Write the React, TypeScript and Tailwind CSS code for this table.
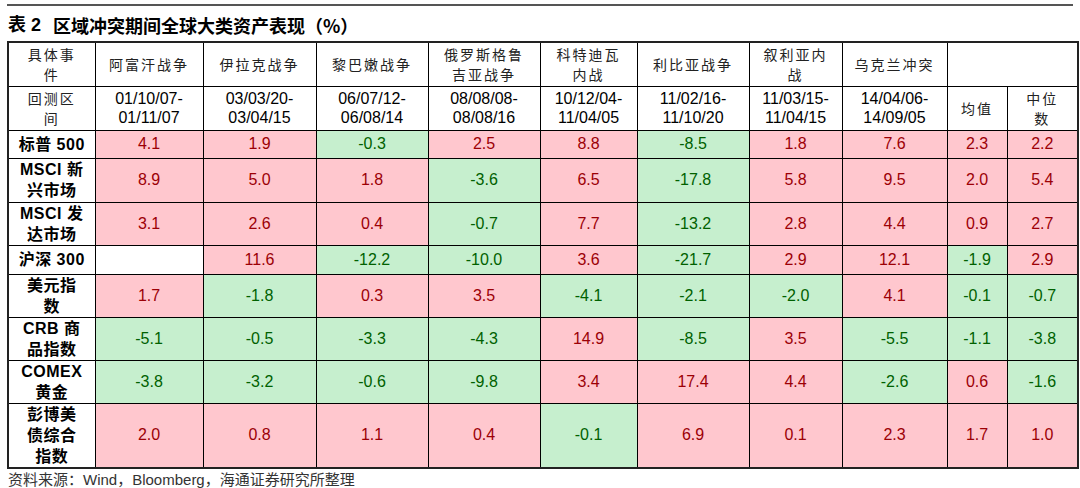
import React from "react";

const CN = "font-['Noto_Sans_CJK_SC',sans-serif]";
const NUM = "font-['Liberation_Sans','Noto_Sans_CJK_SC',sans-serif]";

const COLS = [87, 108, 113, 112, 112, 97, 112, 93, 105, 60, 71];

const EVENTS: string[][] = [
  ["阿富汗战争"],
  ["伊拉克战争"],
  ["黎巴嫩战争"],
  ["俄罗斯格鲁", "吉亚战争"],
  ["科特迪瓦", "内战"],
  ["利比亚战争"],
  ["叙利亚内", "战"],
  ["乌克兰冲突"],
];

const PERIODS: [string, string][] = [
  ["01/10/07-", "01/11/07"],
  ["03/03/20-", "03/04/15"],
  ["06/07/12-", "06/08/14"],
  ["08/08/08-", "08/08/16"],
  ["10/12/04-", "11/04/05"],
  ["11/02/16-", "11/10/20"],
  ["11/03/15-", "11/04/15"],
  ["14/04/06-", "14/09/05"],
];

type Row = { label: string[]; h: number; vals: (number | null)[] };

const ROWS: Row[] = [
  { label: ["标普 500"], h: 28, vals: [4.1, 1.9, -0.3, 2.5, 8.8, -8.5, 1.8, 7.6, 2.3, 2.2] },
  { label: ["MSCI 新", "兴市场"], h: 44, vals: [8.9, 5.0, 1.8, -3.6, 6.5, -17.8, 5.8, 9.5, 2.0, 5.4] },
  { label: ["MSCI 发", "达市场"], h: 42, vals: [3.1, 2.6, 0.4, -0.7, 7.7, -13.2, 2.8, 4.4, 0.9, 2.7] },
  { label: ["沪深 300"], h: 29, vals: [null, 11.6, -12.2, -10.0, 3.6, -21.7, 2.9, 12.1, -1.9, 2.9] },
  { label: ["美元指", "数"], h: 43, vals: [1.7, -1.8, 0.3, 3.5, -4.1, -2.1, -2.0, 4.1, -0.1, -0.7] },
  { label: ["CRB 商", "品指数"], h: 43, vals: [-5.1, -0.5, -3.3, -4.3, 14.9, -8.5, 3.5, -5.5, -1.1, -3.8] },
  { label: ["COMEX", "黄金"], h: 41, vals: [-3.8, -3.2, -0.6, -9.8, 3.4, 17.4, 4.4, -2.6, 0.6, -1.6] },
  { label: ["彭博美", "债综合", "指数"], h: 64, vals: [2.0, 0.8, 1.1, 0.4, -0.1, 6.9, 0.1, 2.3, 1.7, 1.0] },
];

const cell = "border border-black p-0 text-center align-middle";

function Lines({ lines }: { lines: string[] }) {
  return (
    <>
      {lines.map((l, i) => (
        <div key={i}>{l}</div>
      ))}
    </>
  );
}

export default function App() {
  return (
    <div className="w-[1080px] h-[488px] bg-white px-[7px] pt-[4px] text-black">
      {/* title */}
      <div className="border-t-2 border-[#555]" />
      <div className={`h-[35px] pt-[3px] flex items-center text-[18px] font-bold ${NUM} pl-[1px]`}>
        <span>表 2</span>
        <span className={`ml-[12px] ${CN}`}>区域冲突期间全球大类资产表现（%）</span>
      </div>

      <table className="table-fixed border-collapse w-[1070px] border-2 border-[#222]">
        <colgroup>
          {COLS.map((w, i) => (
            <col key={i} style={{ width: w }} />
          ))}
        </colgroup>
        <tbody>
          {/* event names */}
          <tr className="h-[44px]">
            <td className={`${cell} ${CN} text-[14px] leading-[20px] tracking-[2px] text-[#222]`}>
              <Lines lines={["具体事", "件"]} />
            </td>
            {EVENTS.map((e, i) => (
              <td key={i} className={`${cell} ${CN} text-[14px] leading-[20px] tracking-[2px] text-[#222]`}>
                <Lines lines={e} />
              </td>
            ))}
            <td colSpan={2} className={cell} />
          </tr>

          {/* periods */}
          <tr className="h-[44px]">
            <td className={`${cell} ${CN} text-[14px] leading-[20px] tracking-[2px] text-[#222]`}>
              <Lines lines={["回测区", "间"]} />
            </td>
            {PERIODS.map((p, i) => (
              <td key={i} className={`${cell} ${NUM} text-[16px] leading-[19px]`}>
                <Lines lines={p} />
              </td>
            ))}
            <td className={`${cell} ${CN} text-[14px] tracking-[2px] text-[#222]`}>均值</td>
            <td className={`${cell} ${CN} text-[14px] leading-[20px] tracking-[2px] text-[#222]`}>
              <Lines lines={["中位", "数"]} />
            </td>
          </tr>

          {/* values */}
          {ROWS.map((r, ri) => (
            <tr key={ri} style={{ height: r.h }}>
              <td className={`${cell} ${NUM} text-[16px] font-bold leading-[21px] tracking-[0.5px]`}>
                <Lines lines={r.label} />
              </td>
              {r.vals.map((v, vi) => {
                if (v === null) return <td key={vi} className={`${cell} bg-white`} />;
                const pos = v >= 0;
                return (
                  <td
                    key={vi}
                    className={`${cell} ${NUM} text-[16px] ${
                      pos ? "bg-[#ffc7ce] text-[#9c0006]" : "bg-[#c6efce] text-[#006100]"
                    }`}
                  >
                    {v.toFixed(1)}
                  </td>
                );
              })}
            </tr>
          ))}
        </tbody>
      </table>

      <div className={`h-[24px] flex items-center text-[15px] text-[#333] ${NUM} pl-[1px]`}>
        资料来源：Wind，Bloomberg，海通证券研究所整理
      </div>
    </div>
  );
}
